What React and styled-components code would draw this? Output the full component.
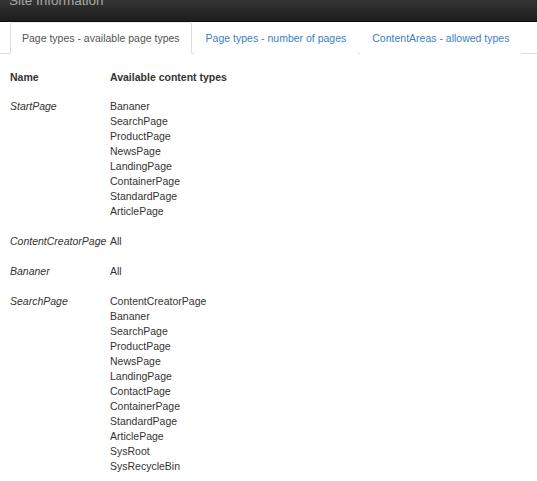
import React from 'react';
import styled, { createGlobalStyle } from 'styled-components';

const GlobalStyle = createGlobalStyle`
  html, body {
    margin: 0;
    padding: 0;
    background: #fff;
  }
  body {
    font-family: "Liberation Sans", Arial, sans-serif;
    font-size: 10.5px;
    line-height: 15px;
    color: #333;
  }
`;

const tabs = [
  'Page types - available page types',
  'Page types - number of pages',
  'ContentAreas - allowed types',
];

const rows = [
  {
    name: 'StartPage',
    types: [
      'Bananer',
      'SearchPage',
      'ProductPage',
      'NewsPage',
      'LandingPage',
      'ContainerPage',
      'StandardPage',
      'ArticlePage',
    ],
  },
  { name: 'ContentCreatorPage', types: ['All'] },
  { name: 'Bananer', types: ['All'] },
  {
    name: 'SearchPage',
    types: [
      'ContentCreatorPage',
      'Bananer',
      'SearchPage',
      'ProductPage',
      'NewsPage',
      'LandingPage',
      'ContactPage',
      'ContainerPage',
      'StandardPage',
      'ArticlePage',
      'SysRoot',
      'SysRecycleBin',
    ],
  },
];

function App() {
  return (
    <>
      <GlobalStyle />
      <Header>
        <Title>Site Information</Title>
      </Header>
      <TabList>
        {tabs.map((t, i) => (
          <Tab key={t} active={i === 0}>
            {t}
          </Tab>
        ))}
      </TabList>
      <Table>
        <HeadCell>Name</HeadCell>
        <HeadCell>Available content types</HeadCell>
        {rows.map((r) => (
          <React.Fragment key={r.name}>
            <NameCell>{r.name}</NameCell>
            <TypesCell>
              {r.types.map((t) => (
                <div key={t}>{t}</div>
              ))}
            </TypesCell>
          </React.Fragment>
        ))}
      </Table>
    </>
  );
}

const Header = styled.div`
  height: 22px;
  overflow: hidden;
  padding-left: 9px;
  background: linear-gradient(#343434, #1d1d1d);
  border-bottom: 1px solid #0e0e0e;
  box-sizing: border-box;
`;

const Title = styled.div`
  margin-top: -7px;
  font-size: 13.5px;
  line-height: 16px;
  color: #a9a9a9;
`;

const TabList = styled.div`
  display: flex;
  gap: 2px;
  padding: 0 10px;
  border-bottom: 1px solid #ddd;
`;

const Tab = styled.div`
  padding: 8px 11px 7px;
  margin-bottom: -1px;
  border: 1px solid ${({ active }) => (active ? '#ddd' : 'transparent')};
  border-bottom-color: ${({ active }) => (active ? '#fff' : 'transparent')};
  border-top-color: ${({ active }) => (active ? '#eee' : 'transparent')};
  border-radius: 3px 3px 0 0;
  background: #fff;
  color: ${({ active }) => (active ? '#555' : '#3c80bd')};
`;

const Table = styled.div`
  display: grid;
  grid-template-columns: 100px auto;
  margin-top: 9px;
  padding: 0 10px;
`;

const HeadCell = styled.div`
  padding: 7px 0 7px;
  font-weight: bold;
`;

const NameCell = styled.div`
  padding: 7px 0 8px;
  font-style: italic;
  white-space: nowrap;
`;

const TypesCell = styled.div`
  padding: 7px 0 8px;
`;

export default App;
